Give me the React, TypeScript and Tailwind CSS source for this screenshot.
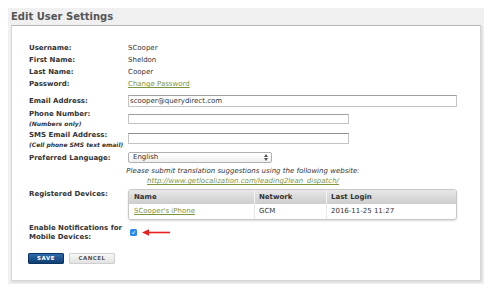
import type React from "react"

function Label({ children, className = "" }: { children: React.ReactNode; className?: string }) {
  return <div className={`w-[99px] shrink-0 font-bold ${className}`}>{children}</div>
}

function Sub({ children }: { children: React.ReactNode }) {
  return <div className="text-[6px] italic font-bold">{children}</div>
}

export default function App() {
  return (
    <div className="w-[496px] h-[300px] bg-white pt-2 pl-2 font-['DejaVu_Sans',Verdana,sans-serif] text-[#333]">
      <div className="w-[476px] bg-[#f0f0f0] px-[3px] pb-[3px]">
        <div className="h-[17px] flex items-center text-[10px] font-bold text-[#555]">Edit User Settings</div>

        {/* Settings panel */}
        <div className="bg-white border border-[#d6d6d6] border-t-[#b8b8b8] shadow-[1px_1px_2px_rgba(0,0,0,0.12)] pl-[17px] pr-[23px] pt-4 pb-4 text-[7px]">
          <div className="flex h-[12px] items-center">
            <Label>Username:</Label>
            <div>SCooper</div>
          </div>
          <div className="flex h-[12px] items-center">
            <Label>First Name:</Label>
            <div>Sheldon</div>
          </div>
          <div className="flex h-[12px] items-center">
            <Label>Last Name:</Label>
            <div>Cooper</div>
          </div>
          <div className="flex h-[13px] items-center">
            <Label>Password:</Label>
            <a className="text-[#7d9440] underline">Change Password</a>
          </div>

          <div className="flex h-[19px] items-start">
            <Label className="mt-[4px] leading-[12px]">Email Address:</Label>
            <div className="mt-[4px] h-[12px] w-[329px] border border-[#c4c4c4] border-t-[#a0a0a0] flex items-center pl-[1px] leading-none">
              scooper@querydirect.com
            </div>
          </div>

          <div className="flex h-[20px] items-start">
            <Label className="leading-[9px]">
              Phone Number:
              <Sub>(Numbers only)</Sub>
            </Label>
            <div className="mt-[4px] h-[10px] w-[221px] border border-[#c4c4c4] border-t-[#a0a0a0]" />
          </div>

          <div className="flex h-[18px] items-start">
            <Label className="mt-[1px] leading-[9px]">
              SMS Email Address:
              <Sub>(Cell phone SMS text email)</Sub>
            </Label>
            <div className="mt-[3px] h-[11px] w-[221px] border border-[#c4c4c4] border-t-[#8f8f8f]" />
          </div>

          <div className="flex h-[18px] items-start">
            <Label className="mt-[4px] leading-[12px]">Preferred Language:</Label>
            <div className="mt-[4px] h-[11px] w-[144px] rounded-[2px] border border-[#b0b0b0] bg-gradient-to-b from-white to-[#f0f0f0] flex items-center justify-between pl-[4px] pr-[3px] leading-none">
              <span>English</span>
              <svg width="4" height="7" viewBox="0 0 4 7">
                <path d="M0 3 L2 0 L4 3 Z M0 4 L2 7 L4 4 Z" fill="#555" />
              </svg>
            </div>
          </div>

          <div className="h-[20px] text-center italic leading-[10px]">
            <div>Please submit translation suggestions using the following website:</div>
            <a className="text-[#7d9440] underline">http://www.getlocalization.com/leading2lean_dispatch/</a>
          </div>

          <div className="flex items-start">
            <Label className="mt-[2px] leading-[12px]">Registered Devices:</Label>
            <div className="mt-[3px] w-[329px] rounded-[3px] border border-[#c8c8c8] shadow-[0_1px_2px_rgba(0,0,0,0.15)] overflow-hidden">
              <div className="grid grid-cols-[125px_72px_1fr] h-[14px] bg-gradient-to-b from-[#e8e8e8] to-[#cdcdcd] font-bold">
                <div className="pl-[5px] flex items-center">Name</div>
                <div className="pl-[4px] flex items-center border-l border-[#f4f4f4]">Network</div>
                <div className="pl-[4px] flex items-center border-l border-[#f4f4f4]">Last Login</div>
              </div>
              <div className="grid grid-cols-[125px_72px_1fr] h-[15px]">
                <div className="pl-[5px] flex items-center">
                  <a className="text-[#7d9440] underline">SCooper's iPhone</a>
                </div>
                <div className="pl-[4px] flex items-center border-l border-[#e8e8e8]">GCM</div>
                <div className="pl-[4px] flex items-center border-l border-[#e8e8e8]">2016-11-25 11:27</div>
              </div>
            </div>
          </div>

          <div className="flex items-start h-[22px]">
            <Label className="mt-[4px] leading-[9px]">
              Enable Notifications for
              <br />
              Mobile Devices:
            </Label>
            <div className="mt-[9px] ml-[2px] flex items-center gap-[5px]">
              <div className="w-[7px] h-[7px] rounded-[1.5px] bg-[#2b8af0] flex items-center justify-center">
                <svg width="5" height="5" viewBox="0 0 5 5">
                  <path d="M1 2.8 L2 3.8 L4 1.2" stroke="white" strokeWidth="0.9" fill="none" />
                </svg>
              </div>
              <svg width="28" height="7" viewBox="0 0 28 7">
                <path d="M5 3.5 L28 3.5" stroke="#e8211c" strokeWidth="1.6" />
                <path d="M0 3.5 L7 0.3 L7 6.7 Z" fill="#e8211c" />
              </svg>
            </div>
          </div>

          <div className="mt-[11px] flex gap-[5px] ml-[-1px]">
            <button className="w-[36px] h-[11px] rounded-[1px] bg-gradient-to-b from-[#2e6bab] to-[#0f3f74] border border-[#0c3560] text-white text-[5.5px] font-bold tracking-[0.5px] flex items-center justify-center">
              SAVE
            </button>
            <button className="w-[46px] h-[11px] rounded-[1px] bg-gradient-to-b from-[#f8f8f8] to-[#e2e2e2] border border-[#cfcfcf] text-[#555] text-[5.5px] font-bold tracking-[0.5px] flex items-center justify-center">
              CANCEL
            </button>
          </div>
        </div>
      </div>
    </div>
  )
}
